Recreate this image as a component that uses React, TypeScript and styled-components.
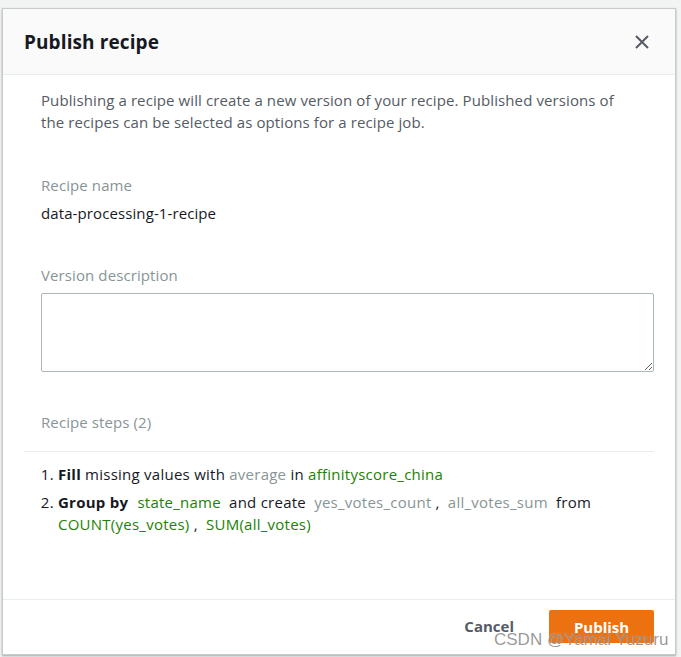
import React from "react";
import styled, { createGlobalStyle } from "styled-components";

const Global = createGlobalStyle`
  html, body { margin: 0; padding: 0; }
  body {
    background: #f2f3f3;
    font-family: "Open Sans", "Liberation Sans", sans-serif;
    -webkit-font-smoothing: antialiased;
  }
`;

const Page = styled.div`
  position: relative;
  width: 681px;
  height: 657px;
  padding: 8px 5px 2px 2px;
  box-sizing: border-box;
  background: #f2f3f3;
  overflow: hidden;
`;

const Modal = styled.div`
  display: flex;
  flex-direction: column;
  height: 647px;
  box-sizing: border-box;
  background: #fff;
  border: 1px solid #c6cbcc;
  box-shadow: 0 1px 2px rgba(0, 28, 36, 0.35);
  font-size: 15px;
  letter-spacing: 0.1px;
`;

const Header = styled.div`
  display: flex;
  align-items: center;
  justify-content: space-between;
  height: 65px;
  padding: 0 21px 0 21px;
  background: #fafafa;
  border-bottom: 1px solid #eaeded;
  flex: none;
`;

const Title = styled.h2`
  margin: 0;
  font-size: 19px;
  font-weight: 700;
  color: #16191f;
  letter-spacing: 0.1px;
`;

const CloseButton = styled.button`
  display: flex;
  align-items: center;
  justify-content: center;
  width: 24px;
  height: 24px;
  padding: 0;
  border: none;
  background: none;
  color: #545b64;
  cursor: pointer;
`;

const Body = styled.div`
  flex: 1;
  padding: 14px 21px 0 21px;
  display: flex;
  flex-direction: column;
`;

const Section = styled.div<{ $top?: number }>`
  padding: 0 0 0 17px;
  margin-top: ${(p) => p.$top ?? 0}px;
`;

const Description = styled.p`
  margin: 0;
  font-size: 15px;
  line-height: 22px;
  color: #545b64;
`;

const Label = styled.div`
  font-size: 15px;
  line-height: 22px;
  color: #879596;
`;

const Value = styled.div`
  margin-top: 6px;
  font-size: 15px;
  line-height: 22px;
  color: #16191f;
`;

const TextArea = styled.textarea`
  display: block;
  box-sizing: border-box;
  width: 100%;
  height: 79px;
  margin-top: 7px;
  border: 1px solid #aab7b8;
  border-radius: 2px;
  padding: 4px 8px;
  font-family: inherit;
  font-size: 15px;
  resize: vertical;
  outline: none;
`;

const Divider = styled.div`
  margin-top: 18px;
  height: 1px;
  background: #eaeded;
`;

const Steps = styled.ol`
  margin: 11px 0 0 0;
  padding: 0 0 0 34px;
  font-size: 15px;
  line-height: 22px;
  letter-spacing: 0.25px;
  color: #16191f;
`;

const Step = styled.li<{ $gap?: number }>`
  margin-top: ${(p) => p.$gap ?? 0}px;
`;

const Op = styled.b<{ $pad?: number }>`
  font-weight: 700;
  padding-right: ${(p) => p.$pad ?? 0}px;
`;

const Token = styled.span<{ $tone: "green" | "gray"; $pad?: number }>`
  color: ${(p) => (p.$tone === "green" ? "#1d8102" : "#879596")};
  padding: 0 ${(p) => p.$pad ?? 0}px;
`;

const Footer = styled.div`
  flex: none;
  display: flex;
  justify-content: flex-end;
  align-items: flex-start;
  gap: 35px;
  height: 55px;
  padding: 10px 21px 0 0;
  box-sizing: border-box;
  border-top: 1px solid #eaeded;
`;

const LinkButton = styled.button`
  border: none;
  background: none;
  padding: 0;
  height: 32px;
  font-family: inherit;
  font-size: 15px;
  font-weight: 700;
  color: #545b64;
  cursor: pointer;
`;

const PrimaryButton = styled.button`
  width: 105px;
  height: 33px;
  padding-bottom: 1px;
  border: none;
  border-radius: 2px;
  background: #ec7211;
  color: #fff;
  font-family: inherit;
  font-size: 15px;
  font-weight: 700;
  cursor: pointer;
`;

const Watermark = styled.div`
  position: absolute;
  left: 494px;
  top: 630px;
  font-family: "Liberation Sans", Arial, sans-serif;
  font-size: 17px;
  color: rgba(120, 120, 120, 0.75);
  text-shadow: 0 0 1px rgba(255, 255, 255, 0.6);
  white-space: nowrap;
  pointer-events: none;
`;

export default function App() {
  return (
    <Page>
      <Global />
      <Modal>
        <Header>
          <Title>Publish recipe</Title>
          <CloseButton aria-label="Close">
            <svg width="16" height="16" viewBox="0 0 16 16">
              <path d="M2 2 L14 14 M14 2 L2 14" stroke="currentColor" strokeWidth="2" fill="none" />
            </svg>
          </CloseButton>
        </Header>
        <Body>
          <Section>
            <Description>
              Publishing a recipe will create a new version of your recipe. Published versions of
              <br />
              the recipes can be selected as options for a recipe job.
            </Description>
          </Section>
          <Section $top={41}>
            <Label>Recipe name</Label>
            <Value>data-processing-1-recipe</Value>
          </Section>
          <Section $top={40}>
            <Label>Version description</Label>
            <TextArea />
          </Section>
          <Section $top={39}>
            <Label>Recipe steps (2)</Label>
          </Section>
          <Divider />
          <Steps>
            <Step>
              <Op>Fill</Op> missing values with <Token $tone="gray">average</Token> in{" "}
              <Token $tone="green">affinityscore_china</Token>
            </Step>
            <Step $gap={6}>
              <Op $pad={1}>Group by</Op> <Token $tone="green" $pad={4}>state_name</Token> and create{" "}
              <Token $tone="gray" $pad={4}>yes_votes_count</Token>,{" "}
              <Token $tone="gray" $pad={4}>all_votes_sum</Token> from{" "}
              <Token $tone="green">COUNT(yes_votes)</Token> ,{" "}
              <Token $tone="green" $pad={4}>SUM(all_votes)</Token>
            </Step>
          </Steps>
        </Body>
        <Footer>
          <LinkButton>Cancel</LinkButton>
          <PrimaryButton>Publish</PrimaryButton>
        </Footer>
      </Modal>
      <Watermark>CSDN @Yamai Yuzuru</Watermark>
    </Page>
  );
}
